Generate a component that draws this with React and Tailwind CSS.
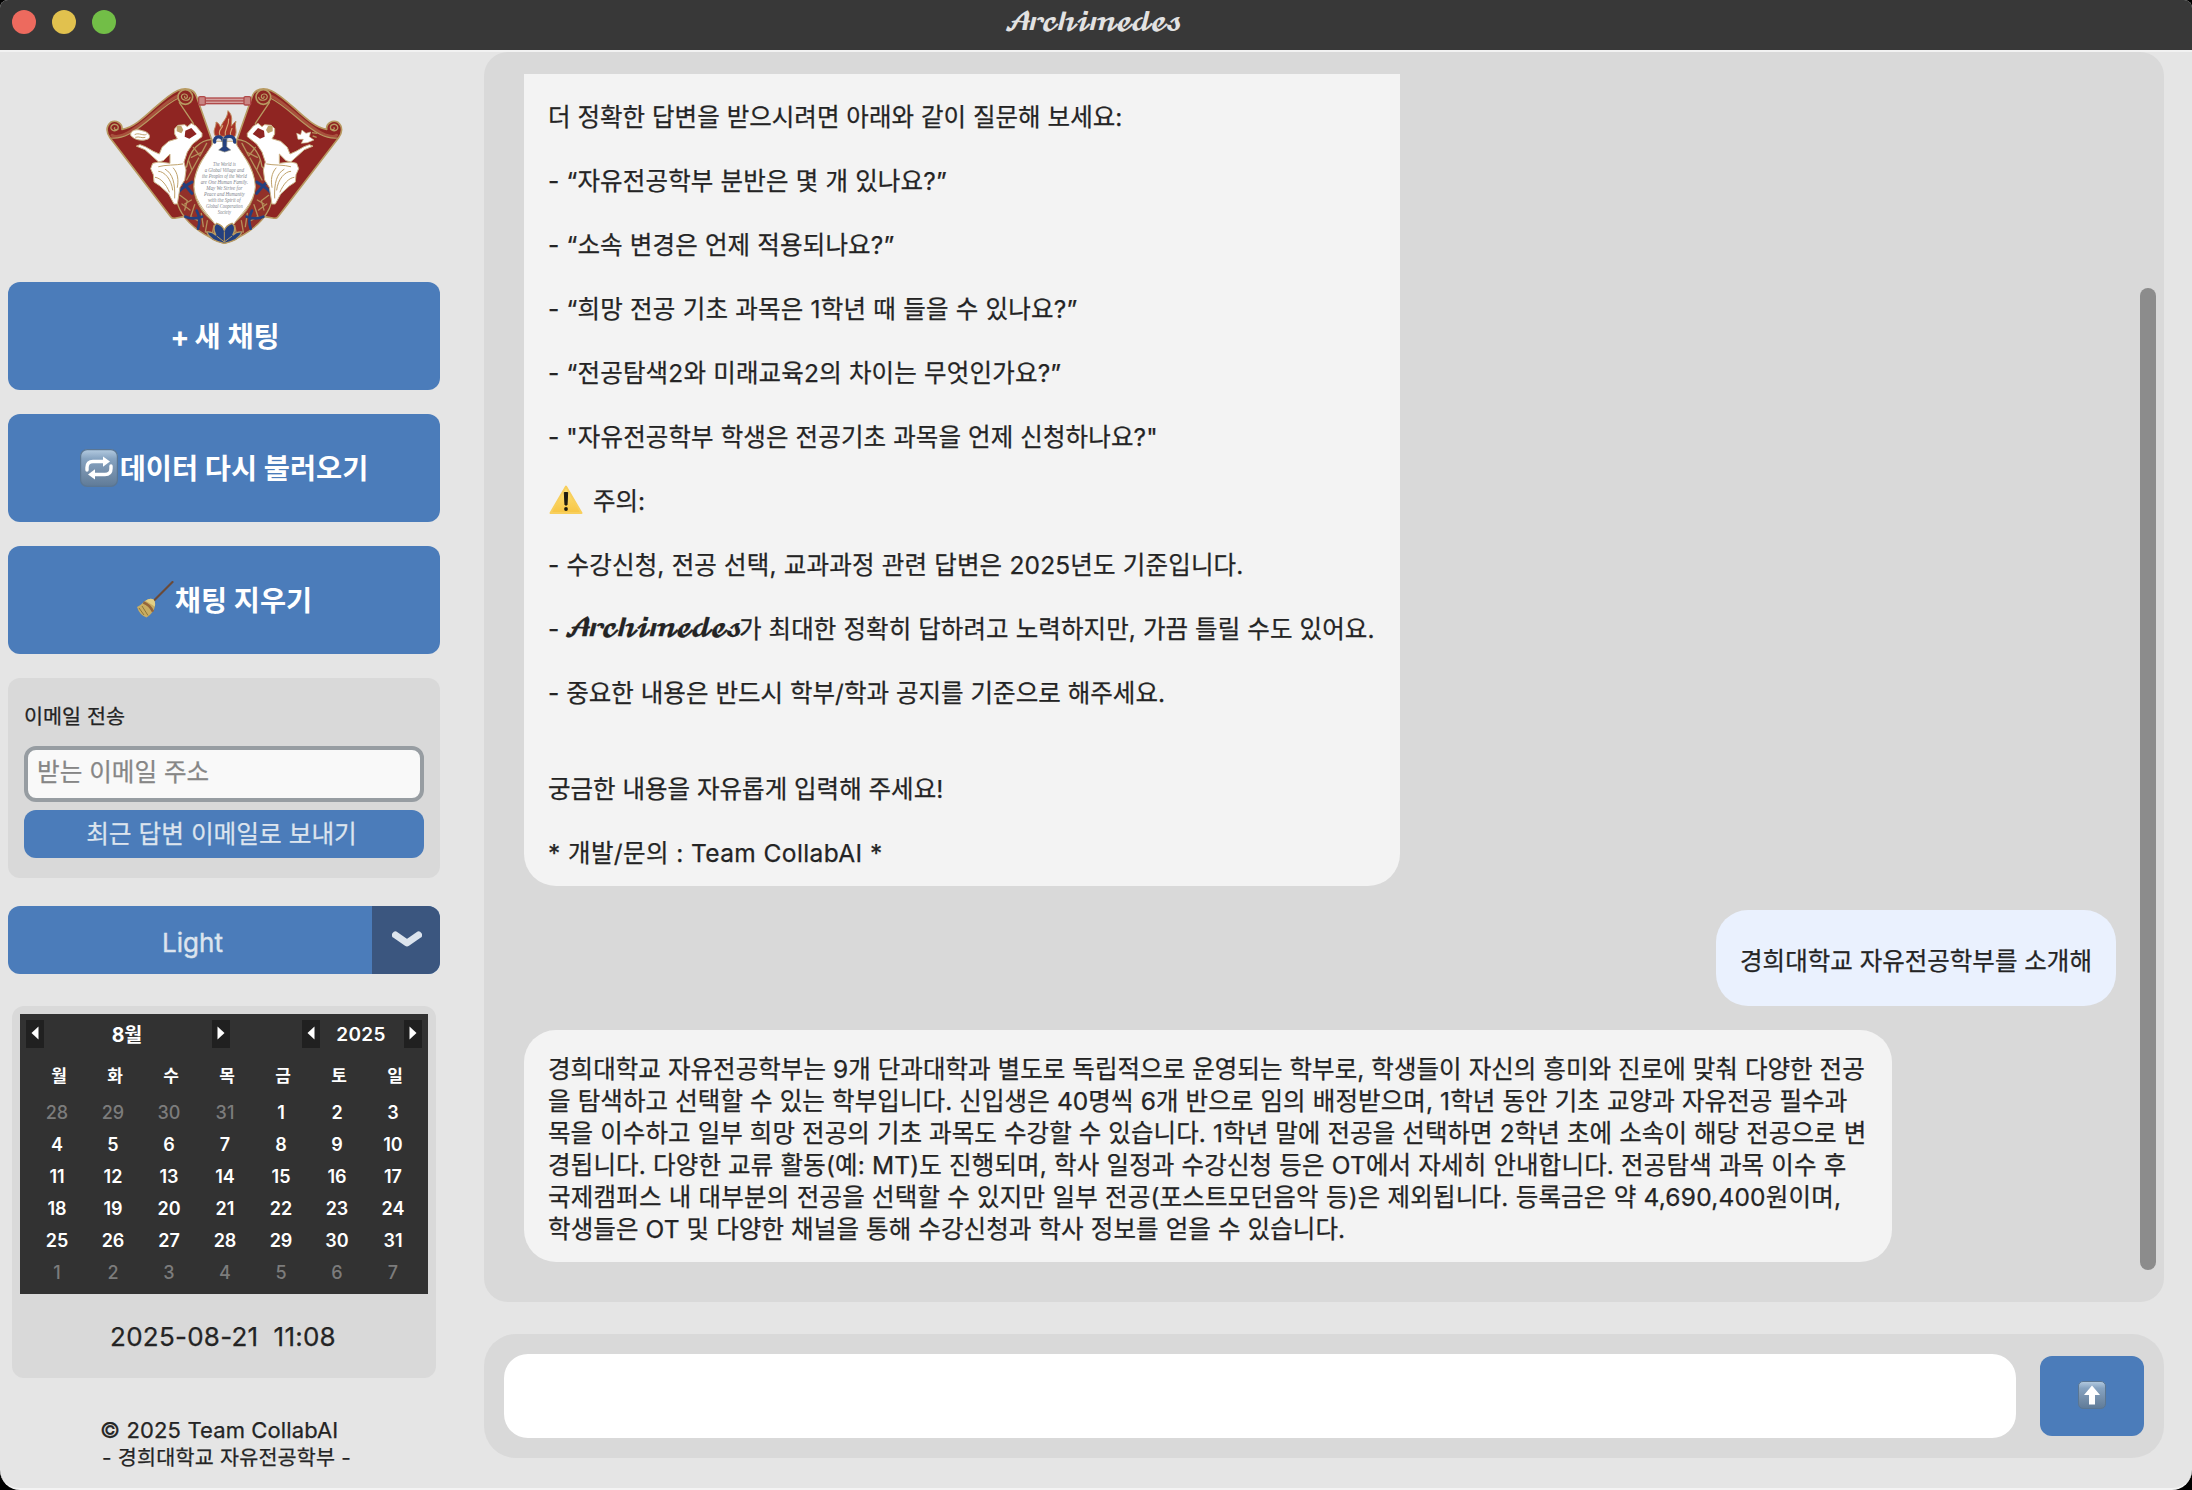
import React from "react";

const INTRO = [
  { text: "더 정확한 답변을 받으시려면 아래와 같이 질문해 보세요:", track: "tracking-[0.02px]" },
  { text: "- “자유전공학부 분반은 몇 개 있나요?”", track: "tracking-[0.15px]" },
  { text: "- “소속 변경은 언제 적용되나요?”", track: "tracking-[0.15px]" },
  { text: "- “희망 전공 기초 과목은 1학년 때 들을 수 있나요?”", track: "tracking-[0.2px]" },
  { text: "- “전공탐색2와 미래교육2의 차이는 무엇인가요?”", track: "tracking-[0.17px]" },
  { text: '- "자유전공학부 학생은 전공기초 과목을 언제 신청하나요?"', track: "tracking-[0.1px]" },
];

const ANSWER = [
  { text: "경희대학교 자유전공학부는 9개 단과대학과 별도로 독립적으로 운영되는 학부로, 학생들이 자신의 흥미와 진로에 맞춰 다양한 전공", track: "tracking-[0.05px]" },
  { text: "을 탐색하고 선택할 수 있는 학부입니다. 신입생은 40명씩 6개 반으로 임의 배정받으며, 1학년 동안 기초 교양과 자유전공 필수과", track: "tracking-[0.1px]" },
  { text: "목을 이수하고 일부 희망 전공의 기초 과목도 수강할 수 있습니다. 1학년 말에 전공을 선택하면 2학년 초에 소속이 해당 전공으로 변", track: "tracking-[0.08px]" },
  { text: "경됩니다. 다양한 교류 활동(예: MT)도 진행되며, 학사 일정과 수강신청 등은 OT에서 자세히 안내합니다. 전공탐색 과목 이수 후", track: "tracking-[0.15px]" },
  { text: "국제캠퍼스 내 대부분의 전공을 선택할 수 있지만 일부 전공(포스트모던음악 등)은 제외됩니다. 등록금은 약 4,690,400원이며,", track: "tracking-[0.2px]" },
  { text: "학생들은 OT 및 다양한 채널을 통해 수강신청과 학사 정보를 얻을 수 있습니다.", track: "tracking-[0.1px]" },
];

const WEEKDAYS = ["월", "화", "수", "목", "금", "토", "일"];
const DAYS = [28, 29, 30, 31, ...Array.from({ length: 31 }, (_, i) => i + 1), 1, 2, 3, 4, 5, 6, 7];

function Script({ className }) {
  return (
    <span className={"inline-block whitespace-nowrap font-['DejaVu_Math_TeX_Gyre'] leading-none tracking-[-4.7px] " + className}>
      𝓐𝓻𝓬𝓱𝓲𝓶𝓮𝓭𝓮𝓼
    </span>
  );
}

function Banner() {
  return (
    <g strokeLinejoin="round" strokeLinecap="round">
      <path d="M60 203 C50 190 46 170 62 157 C78 148 98 160 96 178 C150 172 210 85 262 62 C285 52 312 56 319 78 L366 212 L300 330 L282 440 L258 444 C250 446 246 446 242 440 Z" fill="#8f2522" stroke="#b89a62" strokeWidth="5" />
      <path d="M66 196 C78 204 100 196 112 189 C170 160 215 100 262 78" fill="none" stroke="#a8503c" strokeWidth="9" />
      <path d="M64 204 C80 206 102 200 116 193 C172 164 217 106 266 84" fill="none" stroke="#b89a62" strokeWidth="3.5" />
      <path d="M84 178 C72 188 58 178 64 168 C72 158 88 164 84 176 C80 182 70 178 74 173" fill="none" stroke="#b89a62" strokeWidth="4" />
      <circle cx="286" cy="81" r="22" fill="#8f2522" stroke="#b89a62" strokeWidth="5" />
      <path d="M300 82 C298 94 276 94 274 80 C276 68 294 70 292 82 C288 88 282 84 284 79" fill="none" stroke="#b89a62" strokeWidth="3.5" />
      <path d="M268 98 L310 160" stroke="#b89a62" strokeWidth="4" />
    </g>
  );
}

function Figure() {
  return (
    <g strokeLinejoin="round" strokeLinecap="round">
      <path d="M140 228 L150 224 L166 230 L190 244 L208 252 L216 232 L236 214 L262 206 L254 192 L254 176 L264 166 L284 164 L292 170 L304 160 L318 168 L336 190 L336 200 L308 222 L292 246 L282 276 L288 300 L284 330 L270 352 L262 402 L252 402 L236 372 L210 348 L192 336 L190 314 L182 296 L188 280 L206 276 L240 280 L240 252 L220 272 L206 276 L186 258 L166 240 Z" fill="#fff" stroke="#cdb68a" strokeWidth="3" />
      <path d="M286 182 L304 174 L320 192 L298 206 L284 200 Z" fill="#8f2522" />
      <path d="M260 168 L274 168 L280 180 L274 190 L260 184 Z" fill="#bfa26b" />
      <path d="M206 290 C224 284 260 286 278 282 M206 304 C222 304 244 326 248 360 M226 298 C248 310 256 340 254 384 M250 294 C264 310 266 330 262 352 M196 322 C212 324 228 342 238 366" fill="none" stroke="#bfa26b" strokeWidth="3" />
    </g>
  );
}

function Wreath() {
  return (
    <g strokeLinecap="round" strokeLinejoin="round">
      <path d="M366 208 C330 210 298 240 290 290 L262 320 C254 360 256 400 276 430 C300 470 350 502 402 520 L402 474 C350 450 312 400 312 350 C314 300 336 262 366 236 Z" fill="#923029" stroke="#b89a62" strokeWidth="4" />
      <path d="M350 220 L330 258 L310 232 M336 246 L304 262 M326 264 L306 300 L296 272 M306 300 L290 330 M270 376 L292 392 L284 420 M276 402 L300 420 M304 390 L284 402 M314 404 L302 440 L324 452 M334 430 L340 470 M352 452 L346 486 M372 466 L366 496" fill="none" stroke="#b58f5a" strokeWidth="4" />
      <path d="M264 326 C280 340 292 352 306 370 M262 370 C276 352 294 344 306 336" fill="none" stroke="#24407f" strokeWidth="9" />
      <path d="M286 440 C300 446 320 446 336 440 M320 422 C330 440 330 458 324 476" fill="none" stroke="#24407f" strokeWidth="8" />
    </g>
  );
}

const MOTTO = [
  ["The World is", 283, 68],
  ["a Global Village and", 301, 118],
  ["the Peoples of the World", 320, 134],
  ["are One Human Family.", 338, 142],
  ["May We Strive for", 356, 108],
  ["Peace and Humanity", 374, 122],
  ["with the Spirit of", 392, 98],
  ["Global Cooperation", 410, 110],
  ["Society", 428, 40],
];

function Crest() {
  return (
    <svg viewBox="0 0 810 570" className="h-[190px] w-[270px]">
      <Banner />
      <g transform="translate(806 0) scale(-1 1)"><Banner /></g>
      <g fill="#d5a3a1" stroke="#b04a4a" strokeWidth="4">
        <rect x="330" y="84" width="148" height="17" />
        <path d="M340 92.5 H470" />
        <rect x="326" y="80" width="20" height="25" rx="4" fill="#c98583" />
        <rect x="462" y="80" width="20" height="25" rx="4" fill="#c98583" />
      </g>
      <Wreath />
      <g transform="translate(806 0) scale(-1 1)"><Wreath /></g>
      <Figure />
      <g transform="translate(808 0) scale(-1 1)"><Figure /></g>
      <path d="M122 196 C120 180 142 176 156 182 C172 184 184 196 176 206 C160 214 134 212 122 196 Z" fill="#fff" stroke="#cdb68a" strokeWidth="3" />
      <path d="M134 194 C146 186 162 200 170 192 M136 202 C148 198 156 206 166 202" fill="none" stroke="#bfa26b" strokeWidth="3" />
      <path d="M620 190 L632 194 L636 180 L648 190 L662 186 L658 200 L672 210 L652 218 L634 220 L640 208 L624 208 Z" fill="#fff" stroke="#cdb68a" strokeWidth="2" />
      <path d="M666 188 L682 190 M668 198 L680 202" stroke="#b58f5a" strokeWidth="4" />
      <path d="M372 214 C358 244 312 290 312 350 C314 400 362 440 374 462 L403 484 L432 462 C444 440 494 400 496 350 C494 290 448 244 434 214 Z" fill="#fff" stroke="#cdb68a" strokeWidth="3" />
      <g fontFamily="Liberation Serif, serif" fontStyle="italic" fontSize="17" fill="#7d828b" textAnchor="middle">
        {MOTTO.map(([line, y, w]) => (
          <text key={line} x="403" y={y + 4} textLength={w} lengthAdjust="spacingAndGlyphs">{line}</text>
        ))}
      </g>
      <path d="M376 198 C366 180 380 172 378 156 C388 160 388 166 392 172 C398 152 412 148 414 122 C430 138 424 152 424 168 C430 164 430 158 438 154 C432 172 444 184 434 200 Z" fill="#a53227" stroke="#c08a5c" strokeWidth="3" />
      <path d="M390 196 C382 180 398 176 398 166 M406 196 C402 178 418 170 416 146 M422 196 C418 186 426 180 426 174" fill="none" stroke="#d6a777" strokeWidth="3.5" />
      <path d="M374 216 C370 198 396 194 400 214 C404 194 436 194 434 216" fill="none" stroke="#24407f" strokeWidth="10" strokeLinecap="round" />
      <path d="M397 206 H411 L410 230 L422 240 L404 246 L386 240 L398 230 Z" fill="#24407f" stroke="#8a8a80" strokeWidth="2" />
      <path d="M403 520 C372 514 356 504 350 486 C362 484 372 490 378 496 C370 482 370 468 380 460 C392 464 400 470 403 482 C406 470 414 464 426 460 C436 468 436 482 428 496 C434 490 444 484 456 486 C450 504 434 514 403 520 Z" fill="#24407f" stroke="#b89a62" strokeWidth="4" />
      <path d="M403 484 V516 M380 498 L403 516 L426 498" fill="none" stroke="#b89a62" strokeWidth="3" />
    </svg>
  );
}

function Defs() {
  return (
    <defs>
      <linearGradient id="key" x1="0" y1="0" x2="0" y2="1">
        <stop offset="0" stopColor="#b4cbe0" />
        <stop offset="0.25" stopColor="#86a3c1" />
        <stop offset="0.6" stopColor="#7690ac" />
        <stop offset="1" stopColor="#5f7b98" />
      </linearGradient>
    </defs>
  );
}

function RepeatKey() {
  return (
    <svg viewBox="0 0 38 38" className="mr-[2px] h-[38px] w-[38px] shrink-0">
      <Defs />
      <rect x="0.6" y="0.6" width="36.8" height="36.8" rx="6.5" fill="url(#key)" stroke="#5a7693" strokeWidth="1.2" />
      <path d="M7 21 V18.5 Q7 12.5 13 12.5 H25" fill="none" stroke="#fff" strokeWidth="3.4" strokeLinecap="round" />
      <path d="M23 7.5 L30 12.6 L23 17.8 Z" fill="#fff" />
      <path d="M31 17 V19.5 Q31 25.5 25 25.5 H13" fill="none" stroke="#fff" strokeWidth="3.4" strokeLinecap="round" />
      <path d="M15 20.2 L8 25.4 L15 30.5 Z" fill="#fff" />
    </svg>
  );
}

function UpKey() {
  return (
    <svg viewBox="0 0 28 28" className="h-7 w-7">
      <Defs />
      <rect x="0.5" y="0.5" width="27" height="27" rx="4.5" fill="url(#key)" stroke="#5a7693" />
      <path d="M14 4.5 L22 14 H17 V23.5 H11 V14 H6 Z" fill="#fff" />
    </svg>
  );
}

function Broom() {
  return (
    <svg viewBox="0 0 38 38" className="mr-[1px] h-[38px] w-[38px] shrink-0">
      <path d="M18.5 19 L36.5 1" stroke="#6b4a38" strokeWidth="2.2" strokeLinecap="round" />
      <path d="M9 20 Q14 16.5 17.5 18.5 Q20.5 22 18 28.5 Q15 34 10.5 36.5 Q3.5 34 1 26 Q5 24 9 20 Z" fill="#c9ad62" />
      <path d="M9.5 19.8 Q14 16.5 17.5 18.5 Q19.8 21 18.8 25.5 Z" fill="#e3cf86" />
      <path d="M7.3 21.5 Q13.5 23.5 17 30.6" fill="none" stroke="#94653a" strokeWidth="2.4" />
      <path d="M3 27 L8 34 M6 25 L12 34.5" stroke="#8e763a" strokeWidth="1" />
    </svg>
  );
}

function Warning() {
  return (
    <svg viewBox="0 0 34 30" className="mr-[10px] mb-[2px] ml-[1px] h-[30px] w-[34px]">
      <defs>
        <linearGradient id="warn" x1="0" y1="0" x2="0" y2="1">
          <stop offset="0" stopColor="#fde27a" />
          <stop offset="1" stopColor="#f7c544" />
        </linearGradient>
      </defs>
      <path d="M17 1.5 L32.5 28 H1.5 Z" fill="url(#warn)" stroke="#f8cf5c" strokeWidth="2" strokeLinejoin="round" />
      <path d="M15.3 7.5 H18.7 L18 20 H16 Z" fill="#1d1a10" stroke="#1d1a10" strokeLinejoin="round" />
      <circle cx="17" cy="24" r="1.9" fill="#1d1a10" />
    </svg>
  );
}

function BigButton({ icon, children }) {
  return (
    <button className="flex h-[108px] w-full items-center justify-center rounded-[12px] bg-[#4b7cba] text-[28.4px] font-bold text-white">
      {icon}
      <span className="pt-[3px]">{children}</span>
    </button>
  );
}

function Arrow({ dir }) {
  return (
    <span className="flex h-7 w-[18px] items-center justify-center bg-[#202020]">
      <svg viewBox="0 0 8 14" className="mb-[2px] h-[14px] w-2">
        <path d={dir === "left" ? "M7.5 0.5 V13.5 L0.5 7 Z" : "M0.5 0.5 V13.5 L7.5 7 Z"} fill="#fff" />
      </svg>
    </span>
  );
}

function Calendar() {
  return (
    <div className="h-[280px] w-[408px] bg-[#323232] pt-[6px] font-semibold text-white">
      <div className="flex items-center px-[6px]">
        <Arrow dir="left" />
        <span className="w-[168px] pt-[2px] pr-[2px] text-center text-[19.5px] leading-[26px] font-bold">8월</span>
        <Arrow dir="right" />
        <span className="w-[72px]" />
        <Arrow dir="left" />
        <span className="w-[84px] pt-[2px] pr-[2px] text-center text-[19px] leading-[26px] tracking-[0.3px]">2025</span>
        <Arrow dir="right" />
      </div>
      <div className="mt-[13px] ml-[11px] grid h-[32px] grid-cols-[repeat(7,56px)] items-center text-center text-[17px] font-bold">
        {WEEKDAYS.map((d) => <span key={d}>{d}</span>)}
      </div>
      <div className="mt-1 ml-[9px] grid grid-cols-[repeat(7,56px)] text-center text-[18px] leading-8">
        {DAYS.map((d, i) => (
          <span key={i} className={i < 4 || i > 34 ? "font-medium text-[#7c7c7c]" : ""}>{d}</span>
        ))}
      </div>
    </div>
  );
}

function Sidebar() {
  return (
    <aside className="flex w-[484px] shrink-0 flex-col pl-2">
      <div className="ml-[82px] h-[230px] pt-[18px]"><Crest /></div>
      <div className="flex w-[432px] flex-col gap-6">
        <BigButton><span className="mr-[5px] ml-[2px]">+</span>새 채팅</BigButton>
        <BigButton icon={<RepeatKey />}>데이터 다시 불러오기</BigButton>
        <BigButton icon={<Broom />}>채팅 지우기</BigButton>
        <section className="flex h-[200px] flex-col rounded-[12px] bg-[#d9d9d9] px-4 pt-[23px]">
          <span className="h-[45px] text-[20.7px] leading-[32px] [-webkit-text-stroke:0.25px]">이메일 전송</span>
          <div className="flex h-14 items-center rounded-[12px] border-4 border-[#979da2] bg-[#f9f9f9] px-[9px] pb-1 text-[24.6px] text-[#868686] [-webkit-text-stroke:0.25px]">받는 이메일 주소</div>
          <button className="mt-2 h-12 rounded-[12px] bg-[#4b7cba] pt-[2px] pr-[5px] text-[24.7px] text-[#dce4ee] [-webkit-text-stroke:0.25px]">최근 답변 이메일로 보내기</button>
        </section>
      </div>
      <div className="mt-[28px] flex h-[68px] w-[432px] overflow-hidden rounded-[12px] bg-[#4b7cba]">
        <span className="flex-1 pt-[4px] pl-[5px] text-center text-[26px] leading-[66px] text-[#dce4ee] [-webkit-text-stroke:0.4px]">Light</span>
        <span className="flex w-[68px] items-center justify-center bg-[#3b567f] pl-[2px]">
          <svg viewBox="0 0 30 18" className="h-[18px] w-[30px]">
            <path d="M3.5 4 L15 12 L26.5 4" fill="none" stroke="#dce4ee" strokeWidth="7" strokeLinecap="round" strokeLinejoin="round" />
          </svg>
        </span>
      </div>
      <section className="mt-8 ml-1 flex h-[372px] w-[424px] flex-col items-center rounded-[12px] bg-[#d9d9d9] pt-2">
        <Calendar />
        <span className="mt-[26px] mr-[2px] text-[26px] leading-[34px] tracking-[0.25px] whitespace-pre [-webkit-text-stroke:0.25px]">2025-08-21  11:08</span>
      </section>
      <footer className="mt-[38px] flex flex-col [-webkit-text-stroke:0.25px]">
        <span className="ml-[92px] text-[22px] leading-[28px] tracking-[0.12px]">© 2025 Team CollabAI</span>
        <span className="ml-[94px] text-[20.7px] leading-[28px] tracking-[0.2px]">- 경희대학교 자유전공학부 -</span>
      </footer>
    </aside>
  );
}

function Chat() {
  return (
    <section className="flex h-[1250px] justify-between rounded-[24px] bg-[#d9d9d9] pt-[22px] pr-2 pl-10">
      <div className="flex w-[1592px] flex-col items-start gap-6 text-[24.5px] leading-8 whitespace-nowrap [-webkit-text-stroke:0.25px]">
        <div className="flex h-[812px] w-[876px] flex-col gap-8 rounded-b-[32px] bg-[#f3f3f3] pt-[27px] pl-6">
          {INTRO.map((l) => <p key={l.text} className={l.track}>{l.text}</p>)}
          <p className="flex h-8 items-center"><Warning />주의:</p>
          <p className="tracking-[0.17px]">- 수강신청, 전공 선택, 교과과정 관련 답변은 2025년도 기준입니다.</p>
          <p className="flex h-8 items-center">
            <span className="w-[16px]">-</span>
            <Script className="w-[175px] text-[24px]" />
            <span className="tracking-[0.08px]">가 최대한 정확히 답하려고 노력하지만, 가끔 틀릴 수도 있어요.</span>
          </p>
          <p className="mb-8 tracking-[0.02px]">- 중요한 내용은 반드시 학부/학과 공지를 기준으로 해주세요.</p>
          <p>궁금한 내용을 자유롭게 입력해 주세요!</p>
          <p className="tracking-[0.4px]">* 개발/문의 : Team CollabAI *</p>
        </div>
        <div className="h-24 w-[400px] self-end rounded-[32px] bg-[#eaf1fe] pt-[35px] text-center">경희대학교 자유전공학부를 소개해</div>
        <div className="h-[232px] w-[1368px] rounded-[32px] bg-[#f3f3f3] pt-[23px] pl-6">
          {ANSWER.map((l) => <p key={l.text} className={l.track}>{l.text}</p>)}
        </div>
      </div>
      <div className="mt-[214px] h-[982px] w-4 rounded-full bg-[#8c8c8c]" />
    </section>
  );
}

export default function App() {
  return (
    <div className="h-[1490px] w-[2192px] overflow-hidden bg-black font-['Inter','Noto_Sans_CJK_KR',sans-serif] text-[#242424]">
      <div className="flex h-full flex-col overflow-hidden rounded-t-[8px] rounded-b-[20px] border-b-2 border-[#f4f4f4] bg-[#e5e5e5]">
        <header className="flex h-[52px] shrink-0 items-center border-b-2 border-[#f2f2f2] bg-[#383838] pb-[6px] pl-3">
          <div className="flex w-[992px] gap-4">
            <span className="h-6 w-6 rounded-full bg-[#ed6a5e]" />
            <span className="h-6 w-6 rounded-full bg-[#e1c14e]" />
            <span className="h-6 w-6 rounded-full bg-[#72be47]" />
          </div>
          <Script className="pt-[2px] text-[24px] text-[#e2e2e2]" />
        </header>
        <div className="flex min-h-0 flex-1">
          <Sidebar />
          <main className="flex w-[1680px] flex-col gap-8">
            <Chat />
            <div className="flex h-[124px] items-center rounded-[32px] bg-[#d9d9d9] pl-5">
              <input className="h-[84px] w-[1512px] rounded-[24px] bg-white px-6 text-[24px] outline-none" />
              <button className="ml-6 flex h-20 w-[104px] items-center justify-center rounded-[12px] bg-[#4b7cba] pb-[2px]"><UpKey /></button>
            </div>
          </main>
        </div>
      </div>
    </div>
  );
}
